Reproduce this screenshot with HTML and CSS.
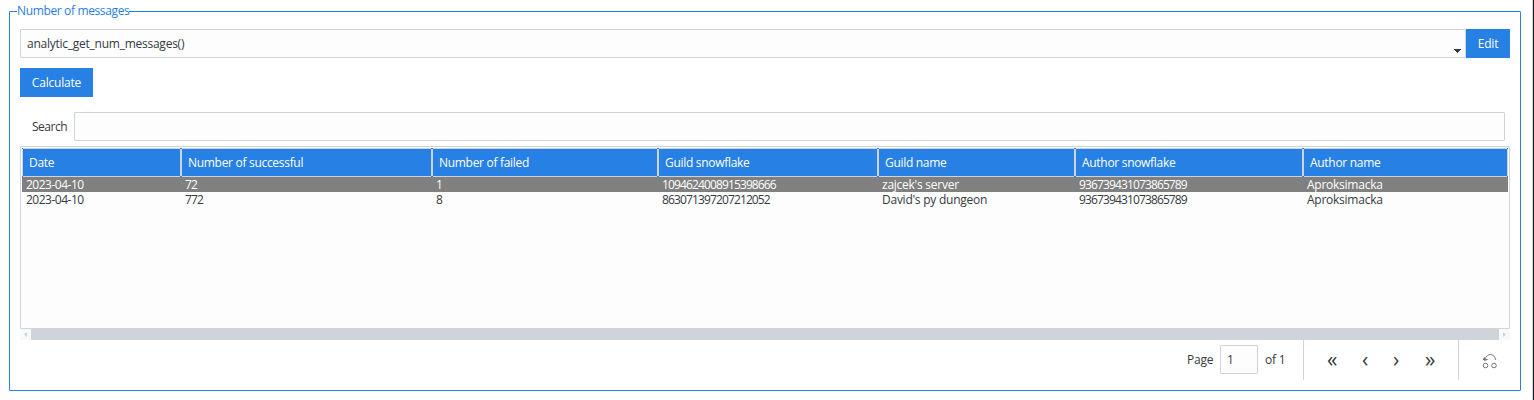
FILE: index.html
```
<!DOCTYPE html>
<html lang="en">
<head>
<meta charset="utf-8">
<title>Number of messages</title>
<link rel="stylesheet" href="styles.css">
</head>
<body>
<main class="frame">
  <span class="legend">Number of messages</span>
  <div class="picker">
    <div class="field combo"><span>analytic_get_num_messages()</span>
      <svg class="caret" width="7" height="4" viewBox="0 0 7 4" shape-rendering="crispEdges"><path d="M0 0h7v1H0zM1 1h5v1H1zM2 2h3v1H2zM3 3h1v1H3z" fill="#343a40"/></svg>
    </div>
    <div class="btn edit">Edit</div>
  </div>
  <div class="btn calc">Calculate</div>
  <div class="search"><span class="search-label">Search</span><div class="field search-input"></div></div>
  <div class="table">
    <div class="row head"><span>Date</span><span>Number of successful</span><span>Number of failed</span><span>Guild snowflake</span><span>Guild name</span><span>Author snowflake</span><span>Author name</span></div>
    <div class="row data selected"><span class="date">2023-04-10</span><span class="num">72</span><span class="num">1</span><span class="num">1094624008915398666</span><span>zajcek's server</span><span class="num">936739431073865789</span><span>Aproksimacka</span></div>
    <div class="row data"><span class="date">2023-04-10</span><span class="num">772</span><span class="num">8</span><span class="num">863071397207212052</span><span>David's py dungeon</span><span class="num">936739431073865789</span><span>Aproksimacka</span></div>
  </div>
  <div class="scroll">
    <svg width="11" height="11" viewBox="0 0 11 11"><path d="M7 3v5L4 5.500z" fill="#ced4da"/></svg>
    <div class="thumb"></div>
    <svg width="11" height="11" viewBox="0 0 11 11"><path d="M4 3v5l3-2.500z" fill="#ced4da"/></svg>
  </div>
  <div class="pager">
    <span class="page-label">Page</span>
    <div class="field page-input">1</div>
    <span class="page-total">of 1</span>
    <div class="nav">
      <span class="n1">«</span><span class="n2">‹</span><span class="n3">›</span><span class="n4">»</span>
    </div>
    <div class="reset">
      <svg width="16" height="16" viewBox="0 0 16 16" fill="none" stroke="#777" stroke-width="1"><circle cx="3.500" cy="12.500" r="2.300"/><circle cx="12" cy="12.500" r="2.300"/><path d="M3 6C4.500 3 6 1.500 8.500 1.500S13 3.500 13.800 7"/><path d="M.8 5.500L2.500 7.200 5.500 6.500M2.300 4.500v2.500" stroke="#444"/></svg>
    </div>
  </div>
</main>
<div class="edge"></div>
</body>
</html>
```
FILE: styles.css
```
* { box-sizing: border-box; }
body {
  margin: 0;
  height: 400px;
  display: flex;
  justify-content: space-between;
  overflow: hidden;
  background: #fff;
  color: #343a40;
  font: 12px/16px "Open Sans", "Noto Sans", sans-serif;
  letter-spacing: -0.25px;
  white-space: nowrap;
}
.frame {
  position: relative;
  width: 1512px;
  height: 380px;
  margin: 11px 0 0 9px;
  padding: 17px 10px 0;
  border: 1px solid #2780e3;
  border-radius: 1px;
}
.legend {
  position: absolute;
  left: 7px;
  top: -9px;
  width: 112px;
  background: #fff;
  color: #2780e3;
  letter-spacing: -0.36px;
}
.edge { width: 2px; background: #1b1f24; border-left: 1px solid #ced4da; }
.field { border: 1px solid #ced4da; border-radius: 1px; background: #fdfdfe; }
.btn {
  height: 29px;
  background: #2780e3;
  color: #fff;
  line-height: 30px;
  text-align: center;
  letter-spacing: -0.2px;
}
.picker { display: flex; height: 29px; }
.combo {
  flex: 1;
  display: flex;
  justify-content: space-between;
  padding: 0 4px 0 6px;
  line-height: 28px;
}
.caret { margin-top: 19px; }
.edit { width: 44px; }
.calc { width: 73px; margin-top: 10px; }
.search { display: flex; height: 29px; margin: 15px 5px 0 0; }
.search-label { width: 54px; padding-left: 12px; line-height: 30px; letter-spacing: -0.5px; }
.search-input { flex: 1; }
.table {
  height: 183px;
  margin-top: 5px;
  padding: 1px 1px 0;
  border: 1px solid #ced4da;
  border-radius: 1px;
  background: #fdfdfe;
}
.row {
  display: grid;
  grid-template-columns: 159px 251px 226px 220px 197px 228px 205px;
}
.head { height: 29px; line-height: 30px; color: #fff; letter-spacing: -0.3px; }
.head span {
  height: 29px;
  padding-left: 7px;
  background:
    linear-gradient(#ced4da, #ced4da) 1px 0 / calc(100% - 2px) 1px no-repeat,
    linear-gradient(#ced4da, #ced4da) 1px 100% / calc(100% - 2px) 1px no-repeat,
    linear-gradient(#ced4da, #ced4da) 0 1px / 1px calc(100% - 2px) no-repeat,
    linear-gradient(#ced4da, #ced4da) 100% 1px / 1px calc(100% - 2px) no-repeat,
    #2780e3;
}
.data { height: 15px; line-height: 15px; }
.data span { padding-left: 4px; }
.data .date { letter-spacing: -0.5px; }
.data .num { letter-spacing: -0.87px; }
.selected { background: #808080; color: #fff; }
.scroll { display: flex; height: 11px; background: #f8f9fa; }
.thumb { flex: 1; background: #ced4da; }
.pager { display: flex; height: 40px; justify-content: flex-end; line-height: 40px; letter-spacing: -0.2px; }
.page-label { width: 33px; }
.page-input { width: 38px; height: 29px; margin-top: 5px; padding-left: 6px; line-height: 27px; }
.page-total { width: 45px; padding-left: 7px; }
.nav {
  display: grid;
  grid-template-columns: 38px 31px 34px 51px;
  width: 155px;
  border-left: 1px solid #ced4da;
  font-size: 21px;
  line-height: 38px;
}
.n1 { padding-left: 23px; }
.n2 { padding-left: 20px; }
.n3 { padding-left: 20px; }
.n4 { padding-left: 18px; }
.reset { width: 52px; padding: 13px 0 0 23px; border-left: 1px solid #ced4da; line-height: 0; }
```
